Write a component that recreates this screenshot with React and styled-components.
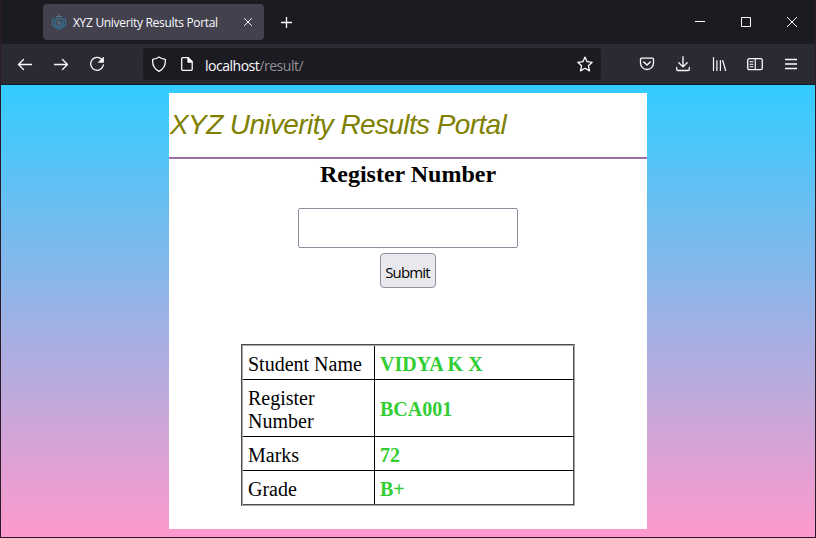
import React from "react";
import styled, { createGlobalStyle } from "styled-components";

const GlobalStyle = createGlobalStyle`
  * { box-sizing: border-box; }
  html, body { margin: 0; padding: 0; overflow: hidden; background: #1c1b22; }
`;

const Window = styled.div`
  width: 816px;
  height: 538px;
  display: flex;
  flex-direction: column;
  border: 1px solid #2a1a28;
  border-top: 0;
  background: #1c1b22;
  font-family: "Open Sans", "Noto Sans", sans-serif;
  color: #fbfbfe;
`;

const TabBar = styled.header`
  height: 44px;
  flex: none;
  display: flex;
  align-items: center;
  padding-left: 42px;
  background: #1c1b22;
`;

const Tab = styled.div`
  width: 221px;
  height: 36px;
  display: flex;
  align-items: center;
  padding: 0 10px 0 8px;
  border-radius: 4px;
  background: #42414d;
`;

const TabTitle = styled.span`
  flex: 1;
  margin-left: 6px;
  padding-top: 2px;
  font-size: 12px;
  line-height: 16px;
  letter-spacing: -0.31px;
  white-space: nowrap;
`;

const Icon = styled.svg`
  display: block;
  flex: none;
  fill: none;
  stroke: #fbfbfe;
  stroke-width: ${(p) => p.$weight || 1.3};
  stroke-linecap: ${(p) => (p.$square ? "butt" : "round")};
  stroke-linejoin: ${(p) => (p.$square ? "miter" : "round")};
`;

const NewTab = styled.div`
  margin-left: 15px;
`;

const WindowControls = styled.div`
  display: flex;
  gap: 30px;
  margin-left: auto;
  padding-right: 15px;
`;

const Toolbar = styled.div`
  height: 40px;
  flex: none;
  display: flex;
  align-items: center;
  padding: 0 16px;
  background: #2b2a33;
`;

const NavButtons = styled.nav`
  display: flex;
  gap: 20px;
`;

const AddressBar = styled.div`
  width: 458px;
  height: 32px;
  display: flex;
  align-items: center;
  margin-left: 38px;
  padding: 0 8px;
  border-radius: 4px;
  background: #1c1b22;
`;

const PageInfo = styled.div`
  display: flex;
  gap: 12px;
`;

const Url = styled.div`
  flex: 1;
  margin-left: 10px;
  font-size: 14px;
  line-height: 20px;
  letter-spacing: -0.48px;
  padding-top: 3px;
`;

const UrlPath = styled.span`
  color: #8f8f98;
`;

const Tools = styled.div`
  display: flex;
  gap: 20px;
  margin-left: auto;
`;

const Viewport = styled.main`
  flex: 1;
  display: flex;
  justify-content: center;
  padding: 8px 0;
  border-top: 1px solid #0c1c28;
  background: linear-gradient(#33ccff, #ff99cc);
`;

const Sheet = styled.section`
  width: 478px;
  height: 436px;
  display: flex;
  flex-direction: column;
  align-items: center;
  background: #fff;
  color: #000;
  font-family: "Liberation Serif", serif;
`;

const Banner = styled.h1`
  width: 100%;
  height: 66px;
  margin: 0;
  padding-left: 1px;
  border-bottom: 2px solid #a06ea8;
  color: #808000;
  font: italic 400 28px/64px "Liberation Sans", sans-serif;
  letter-spacing: -0.61px;
  white-space: nowrap;
`;

const Label = styled.h2`
  margin: 1px 0 0;
  font-size: 24px;
  line-height: 28px;
`;

const NumberInput = styled.input`
  width: 220px;
  height: 40px;
  margin-top: 20px;
  border: 1px solid #8f8f9d;
  border-radius: 2px;
  background: #fff;
  outline: none;
`;

const Submit = styled.button`
  width: 56px;
  height: 35px;
  margin-top: 5px;
  padding: 2px 1px 0 0;
  border: 1px solid #8f8f9d;
  border-radius: 4px;
  background: #e9e9ed;
  color: #000;
  font: 15px/18px "Open Sans", sans-serif;
  letter-spacing: -0.82px;
`;

const Results = styled.dl`
  width: 334px;
  height: 162px;
  margin: 56px 0 0;
  padding: 1px;
  display: grid;
  grid-template-columns: 132px 1fr;
  grid-template-rows: 34px 57px 34px 33px;
  border: 1px solid;
  border-color: #4c4c4c #a6a6a6 #a6a6a6 #4c4c4c;
  box-shadow: inset 1px 1px #a6a6a6, inset -1px -1px #4c4c4c;
  font-size: 20px;
  line-height: 23px;
`;

const Name = styled.dt`
  display: flex;
  align-items: center;
  padding: 3px 5px 0;
  border-right: 1px solid #000;
  border-bottom: ${(p) => (p.$last ? 0 : 1)}px solid #000;
`;

const Value = styled.dd`
  display: flex;
  align-items: center;
  margin: 0;
  padding: 3px 5px 0;
  border-bottom: ${(p) => (p.$last ? 0 : 1)}px solid #000;
  color: #32cd32;
  font-weight: 700;
`;

const rows = [
  ["Student Name", "VIDYA K X"],
  ["Register Number", "BCA001"],
  ["Marks", "72"],
  ["Grade", "B+"],
];

const Glyph = ({ size = 16, children, ...rest }) => (
  <Icon width={size} height={size} viewBox={`0 0 ${size} ${size}`} {...rest}>
    {children}
  </Icon>
);

const Favicon = () => (
  <Glyph $weight={1.2}>
    <g stroke="#35749a">
      <path d="M3 4 1.500 6v5L8 15.300l6.500-4.300V6L13 4" />
      <path d="M4 6v4.500L8 13l4-2.500V6L10 4.500H6z" />
      <path d="M7 6v4h2.500V8H7M5.500 2.500h5M8 .5v2" stroke="#58788a" />
    </g>
  </Glyph>
);

export default function App() {
  return (
    <>
      <GlobalStyle />
      <Window>
        <TabBar>
          <Tab>
            <Favicon />
            <TabTitle>XYZ Univerity Results Portal</TabTitle>
            <Glyph size={12} $weight={1}><path d="m2.500 2.500 7 7m0-7-7 7" /></Glyph>
          </Tab>
          <NewTab>
            <Glyph $square><path d="M7.500 3v11M2 8.500h11" /></Glyph>
          </NewTab>
          <WindowControls>
            <Glyph $weight={1} $square><path d="M3 7.500h10" /></Glyph>
            <Glyph $weight={1} $square><path d="M3.500 3.500h9v9h-9z" /></Glyph>
            <Glyph $weight={1} $square><path d="m3 3 10 10m0-10L3 13" /></Glyph>
          </WindowControls>
        </TabBar>
        <Toolbar>
          <NavButtons>
            <Glyph><path d="M14.500 8.500h-13m5-5-5 5 5 5" /></Glyph>
            <Glyph><path d="M1.500 8.500h13m-5-5 5 5-5 5" /></Glyph>
            <Glyph>
              <path d="M12.800 3.500a6.400 6.400 0 1 0 1.600 5.500" />
              <path d="M14.500 1.500v4.800H9.700z" fill="#fbfbfe" strokeWidth=".8" />
            </Glyph>
          </NavButtons>
          <AddressBar>
            <PageInfo>
              <Glyph><path d="M8 1.100c1.600 1.300 3.700 2 6.300 2.200.5 5.200-1.200 9.500-6.300 12C2.900 12.800 1.200 8.500 1.700 3.300 4.300 3.100 6.400 2.400 8 1.100z" /></Glyph>
              <Glyph>
                <path d="M3.700 1.700h5.500l4 4v7.600a1 1 0 0 1-1 1H3.700a1 1 0 0 1-1-1V2.700a1 1 0 0 1 1-1z" />
                <path d="M9 2v4h4z" fill="#fbfbfe" />
              </Glyph>
            </PageInfo>
            <Url>localhost<UrlPath>/result/</UrlPath></Url>
            <Glyph><path d="m8 1.100 2.100 4.600 5.100.6-3.800 3.400 1.100 5.200L8 12.300l-4.500 2.600 1.100-5.200L.8 6.300l5.100-.6z" /></Glyph>
          </AddressBar>
          <Tools>
            <Glyph>
              <path d="M2.700 2.200h10.600a1.200 1.200 0 0 1 1.200 1.200V7a6.500 6.500 0 0 1-13 0V3.400a1.200 1.200 0 0 1 1.200-1.200z" />
              <path d="M4.800 6 8 9l3.200-3" strokeWidth="1.500" />
            </Glyph>
            <Glyph><path d="M8 .7v10M3.800 6.700 8 10.900l4.200-4.200M1.700 11.500v1.700c0 .8.500 1.300 1.300 1.300h10c.8 0 1.300-.5 1.300-1.300v-1.700" /></Glyph>
            <Glyph $weight={1.200}><path d="M2.500 1.500v13M5.900 4.500v10M9.400 4.500v10M11.700 4.500l2.900 10" /></Glyph>
            <Glyph>
              <rect x=".7" y="2.700" width="14.600" height="11" rx="1.800" />
              <path d="M8.300 3v10.500M3 5.700h3M3 8.200h3M3 10.700h3" strokeWidth="1.100" />
            </Glyph>
            <Glyph $square><path d="M2 3.500h12M2 8h12M2 12.500h12" /></Glyph>
          </Tools>
        </Toolbar>
        <Viewport>
          <Sheet>
            <Banner>XYZ Univerity Results Portal</Banner>
            <Label>Register Number</Label>
            <NumberInput aria-label="Register Number" />
            <Submit>Submit</Submit>
            <Results>
              {rows.map(([name, value], i) => (
                <React.Fragment key={name}>
                  <Name $last={i === rows.length - 1}>{name}</Name>
                  <Value $last={i === rows.length - 1}>{value}</Value>
                </React.Fragment>
              ))}
            </Results>
          </Sheet>
        </Viewport>
      </Window>
    </>
  );
}
